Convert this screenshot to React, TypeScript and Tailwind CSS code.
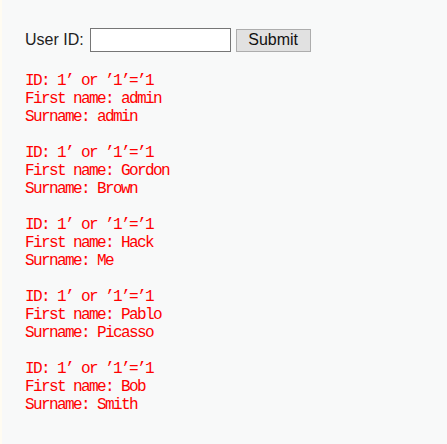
const rows = [
  { first: "admin", last: "admin" },
  { first: "Gordon", last: "Brown" },
  { first: "Hack", last: "Me" },
  { first: "Pablo", last: "Picasso" },
  { first: "Bob", last: "Smith" },
]

export default function App() {
  return (
    <div className="min-h-screen bg-[#f8f9f9] border-l-2 border-[#fffcf2] pl-[23px] pt-[28px] font-['Liberation_Sans',Arial,sans-serif]">
      {/* Form */}
      <form className="flex items-center" onSubmit={(e) => e.preventDefault()}>
        <label className="text-[16px] leading-[18px] text-[#222]">User ID:</label>
        <input
          type="text"
          className="ml-[6px] w-[141px] h-[24px] bg-white border border-[#767676] outline-none px-1 text-[14px]"
        />
        <button
          type="submit"
          className="ml-[5px] w-[75px] h-[23px] bg-[#e1e1e1] border border-[#adadad] text-[16px] leading-[18px] text-[#111]"
        >
          Submit
        </button>
      </form>

      {/* Results */}
      <div className="mt-[20px]">
        {rows.map((r, i) => (
          <pre
            key={i}
            className="mb-[18px] text-[#ff0000] text-[16px] leading-[18px] tracking-[-1.6px] font-['Liberation_Mono','Courier_New',monospace]"
          >
            {`ID: 1’ or ’1’=’1\nFirst name: ${r.first}\nSurname: ${r.last}`}
          </pre>
        ))}
      </div>
    </div>
  )
}
